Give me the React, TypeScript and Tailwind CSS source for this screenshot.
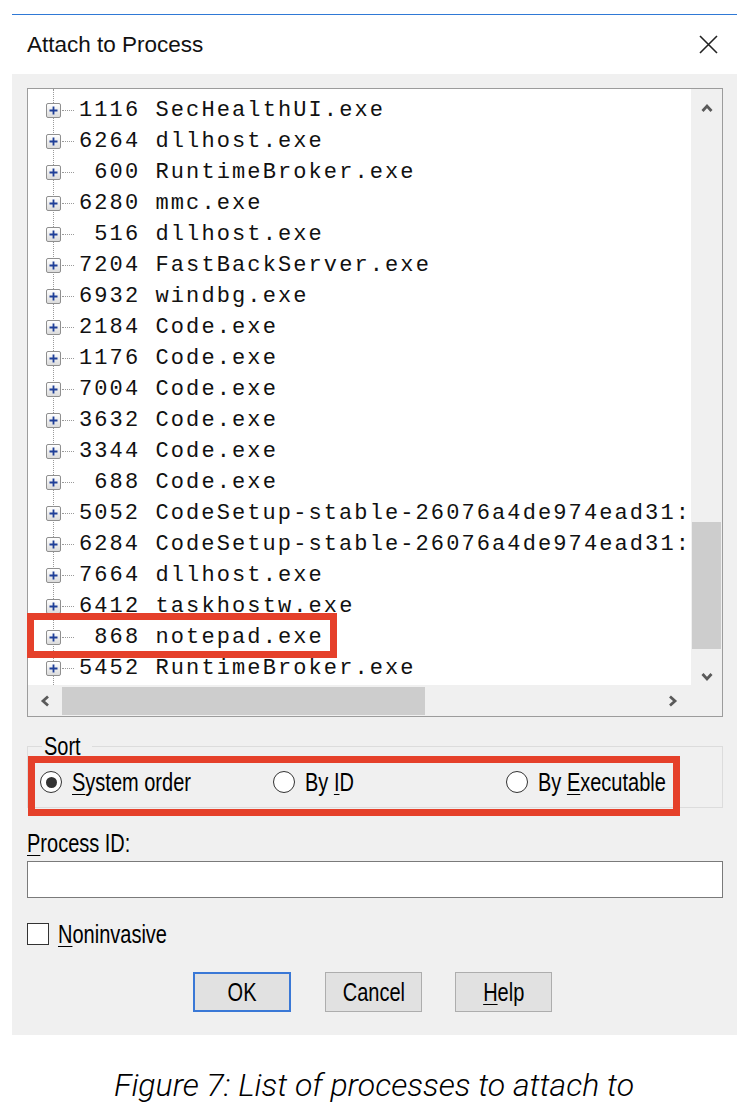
import type { ReactNode } from "react";

const processes = [
  "1116 SecHealthUI.exe",
  "6264 dllhost.exe",
  " 600 RuntimeBroker.exe",
  "6280 mmc.exe",
  " 516 dllhost.exe",
  "7204 FastBackServer.exe",
  "6932 windbg.exe",
  "2184 Code.exe",
  "1176 Code.exe",
  "7004 Code.exe",
  "3632 Code.exe",
  "3344 Code.exe",
  " 688 Code.exe",
  "5052 CodeSetup-stable-26076a4de974ead31:",
  "6284 CodeSetup-stable-26076a4de974ead31:",
  "7664 dllhost.exe",
  "6412 taskhostw.exe",
  " 868 notepad.exe",
  "5452 RuntimeBroker.exe",
];

// windows dialog text looks narrow and tall, squeeze it a bit
function Narrow({ children, center }: { children: ReactNode; center?: boolean }) {
  return (
    <span
      className={
        center
          ? "inline-block origin-center scale-x-[0.8] whitespace-nowrap"
          : "inline-block origin-left scale-x-[0.8] whitespace-nowrap"
      }
    >
      {children}
    </span>
  );
}

function Key({ children }: { children: ReactNode }) {
  return <span className="underline decoration-1 underline-offset-[3px]">{children}</span>;
}

function Chevron({ dir }: { dir: "up" | "down" | "left" | "right" }) {
  const pts = {
    up: "1.5,9 6,4 10.5,9",
    down: "1.5,3 6,8 10.5,3",
    left: "9,1.5 4,6 9,10.5",
    right: "3,1.5 8,6 3,10.5",
  }[dir];
  return (
    <svg width="12" height="12" viewBox="0 0 12 12" className="block">
      <polyline points={pts} fill="none" stroke="#5a5a5a" strokeWidth="2.8" />
    </svg>
  );
}

function TreeBox() {
  return (
    <div className="flex h-[15px] w-[15px] items-center justify-center rounded-[2px] border border-[#8f8f8f] bg-gradient-to-b from-white to-[#dcdcdc]">
      <svg width="9" height="9" viewBox="0 0 9 9" className="block">
        <path d="M0.5 4.5h8M4.5 0.5v8" stroke="#1f3f98" strokeWidth="1.8" />
      </svg>
    </div>
  );
}

function Radio({ checked, children }: { checked?: boolean; children: ReactNode }) {
  return (
    <div className="flex items-center">
      <div className="flex h-[22px] w-[22px] items-center justify-center rounded-full border-[1.5px] border-[#333] bg-white">
        {checked && <div className="h-[11px] w-[11px] rounded-full bg-[#333]" />}
      </div>
      <div className="ml-[10px]">
        <Narrow>{children}</Narrow>
      </div>
    </div>
  );
}

function Button({ children, primary }: { children: ReactNode; primary?: boolean }) {
  return (
    <div
      className={
        primary
          ? "flex h-[40px] w-[98px] items-center justify-center border-2 border-[#3a78d6] bg-[#e1e1e1]"
          : "flex h-[40px] w-[97px] items-center justify-center border border-[#adadad] bg-[#e1e1e1]"
      }
    >
      <Narrow center>{children}</Narrow>
    </div>
  );
}

export default function App() {
  return (
    <div className="h-[1114px] w-[748px] bg-white font-['Liberation_Sans',Arial,sans-serif] text-black">
      <div className="h-[14px]" />
      <div className="ml-[12px] w-[725px] border-t border-[#2f79d6]">
        <div className="flex h-[59px] items-center justify-between bg-white pl-[15px] pr-[19px]">
          <span className="text-[22.5px] text-[#111]">Attach to Process</span>
          <svg width="19" height="19" viewBox="0 0 19 19" className="block">
            <path d="M1 1L18 18M18 1L1 18" stroke="#222" strokeWidth="1.6" />
          </svg>
        </div>

        <div className="h-[961px] bg-[#f0f0f0] pl-[15px] pr-[14px] pt-[14px] text-[25px] leading-[30px]">
          <div className="relative flex h-[629px] flex-col border border-[#9c9c9c] bg-white">
            <div className="flex min-h-0 flex-1">
              <div className="relative flex-1 overflow-hidden">
                <div className="absolute bottom-0 left-[25px] top-0 border-l border-dotted border-[#9a9a9a]" />
                <div className="relative pt-[6px] font-['Liberation_Mono',monospace] text-[22px] tracking-[2.1px] text-[#111]">
                  {processes.map((p) => (
                    <div key={p} className="flex h-[31px] items-center pl-[18px]">
                      <TreeBox />
                      <div className="ml-[1px] w-[12px] border-t border-dotted border-[#9a9a9a]" />
                      <span className="ml-[5px] whitespace-pre">{p}</span>
                    </div>
                  ))}
                </div>
              </div>
              <div className="flex w-[31px] flex-col items-center bg-[#f0f0f0]">
                <div className="mt-[13px]">
                  <Chevron dir="up" />
                </div>
                <div className="mt-[408px] h-[127px] w-[29px] bg-[#cdcdcd]" />
                <div className="mt-[22px]">
                  <Chevron dir="down" />
                </div>
              </div>
            </div>
            <div className="flex h-[31px]">
              <div className="relative flex flex-1 items-center bg-[#f0f0f0]">
                <div className="ml-[11px]">
                  <Chevron dir="left" />
                </div>
                <div className="ml-[11px] h-[28px] w-[363px] bg-[#cdcdcd]" />
                <div className="ml-auto mr-[12px]">
                  <Chevron dir="right" />
                </div>
              </div>
              <div className="w-[31px] bg-[#f0f0f0]" />
            </div>

            <div className="absolute left-[-1px] top-[524px] h-[45px] w-[310px] border-[7px] border-[#e5402a]" />
          </div>

          <div className="relative mt-[29px]">
            <div className="relative h-[62px] border border-[#dcdcdc]">
              <div className="absolute left-[14px] top-[-16px] bg-[#f0f0f0] px-[2px] leading-[30px]">
                <Narrow>Sort</Narrow>
              </div>
              <div className="grid h-full grid-cols-[233px_233px_auto] items-center pl-[12px] pt-[10px]">
                <Radio checked>
                  <Key>S</Key>ystem order
                </Radio>
                <Radio>
                  By <Key>I</Key>D
                </Radio>
                <Radio>
                  By <Key>E</Key>xecutable
                </Radio>
              </div>
            </div>
            <div className="absolute left-[1px] top-[10px] h-[60px] w-[652px] border-[7px] border-[#e5402a]" />
          </div>

          <div className="mt-[20px] h-[30px]">
            <Narrow>
              <Key>P</Key>rocess ID:
            </Narrow>
          </div>
          <div className="mt-[3px] h-[37px] border border-[#7a7a7a] bg-white" />

          <div className="mt-[21px] flex h-[30px] items-center">
            <div className="h-[22px] w-[22px] border border-[#333] bg-white" />
            <div className="ml-[9px]">
              <Narrow>
                <Key>N</Key>oninvasive
              </Narrow>
            </div>
          </div>

          <div className="mt-[23px] flex pl-[166px]">
            <Button primary>OK</Button>
            <div className="ml-[34px]">
              <Button>Cancel</Button>
            </div>
            <div className="ml-[33px]">
              <Button>
                <Key>H</Key>elp
              </Button>
            </div>
          </div>
        </div>
      </div>

      <p className="mt-[30px] text-center font-['Roboto',sans-serif] text-[32px] font-light italic leading-[40px] text-black">
        Figure 7: List of processes to attach to
      </p>
    </div>
  );
}
